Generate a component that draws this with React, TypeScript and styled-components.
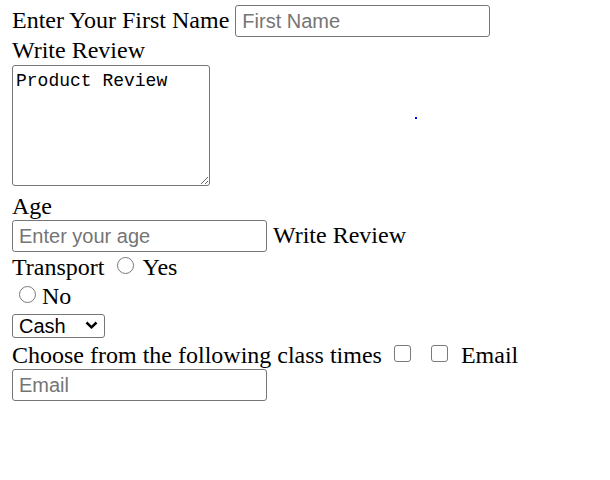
import React from "react";
import styled, { createGlobalStyle } from "styled-components";

const Global = createGlobalStyle`
  html, body { margin: 0; padding: 0; background: #fff; }
  body { font-family: "Liberation Serif", "Times New Roman", serif; color: #000; }
`;

const Page = styled.form`
  position: relative;
  padding: 5px 12px 0 12px;
  font-size: 24px;
  line-height: normal;
`;

const Line = styled.div<{ $mt?: number }>`
  margin-top: ${(p) => p.$mt ?? 0}px;
  white-space: nowrap;
`;

const TextInput = styled.input`
  box-sizing: border-box;
  width: 255px;
  height: 32px;
  margin: 0;
  padding: 0 6px;
  border: 1px solid #767676;
  border-radius: 3px;
  font-family: "Liberation Sans", Arial, sans-serif;
  font-size: 20px;
  color: #000;
  background: #fff;
  vertical-align: baseline;
  &::placeholder { color: #757575; }
`;

const Review = styled.textarea`
  box-sizing: border-box;
  width: 198px;
  height: 121px;
  margin: 0;
  padding: 5px 3px 3px 3px;
  border: 1px solid #767676;
  border-radius: 3px;
  font-family: "Liberation Mono", "Courier New", monospace;
  font-size: 18px;
  line-height: 1.15;
  color: #000;
  resize: both;
  vertical-align: baseline;
`;

const Radio = styled.input.attrs({ type: "radio" })<{ $ml: number; $mr: number }>`
  appearance: none;
  -webkit-appearance: none;
  box-sizing: border-box;
  display: inline-block;
  width: 17px;
  height: 17px;
  min-width: 17px;
  padding: 0;
  margin: 0 ${(p) => p.$mr}px 0 ${(p) => p.$ml}px;
  border: 1.4px solid #7a7a7a;
  border-radius: 50%;
  background: #fff;
  vertical-align: 1px;
`;

const Check = styled.input.attrs({ type: "checkbox" })<{ $ml: number; $mr: number }>`
  appearance: none;
  -webkit-appearance: none;
  box-sizing: border-box;
  display: inline-block;
  width: 17px;
  height: 17px;
  padding: 0;
  margin: 0 ${(p) => p.$mr}px 0 ${(p) => p.$ml}px;
  border: 1.4px solid #7a7a7a;
  border-radius: 3px;
  background: #fff;
  vertical-align: 1px;
`;

const SelectWrap = styled.span`
  position: relative;
  display: inline-block;
  vertical-align: baseline;
`;

const Select = styled.select`
  appearance: none;
  box-sizing: border-box;
  width: 93px;
  height: 24px;
  margin: 0;
  padding: 0 0 0 6px;
  border: 1px solid #767676;
  border-radius: 3px;
  background: #fff;
  color: #000;
  font-family: "Liberation Sans", Arial, sans-serif;
  font-size: 20px;
  line-height: 22px;
`;

const Chevron = styled.svg`
  position: absolute;
  right: 7px;
  top: 9px;
  width: 13px;
  height: 8px;
  pointer-events: none;
`;

const Dot = styled.a`
  position: absolute;
  left: 415px;
  top: 117px;
  width: 2px;
  height: 2px;
  background: #0000ee;
`;

const Gap = styled.span<{ $w: number }>`
  display: inline-block;
  width: ${(p) => p.$w}px;
`;

export default function App() {
  return (
    <>
      <Global />
      <Page onSubmit={(e) => e.preventDefault()}>
        <Line>
          Enter Your First Name <TextInput type="text" placeholder="First Name" />
        </Line>
        <Line>Write Review</Line>
        <Line $mt={1}>
          <Review defaultValue="Product Review" />
        </Line>
        <Line $mt={1}>Age</Line>
        <Line>
          <TextInput type="number" placeholder="Enter your age" />
          <Gap $w={6} />
          Write Review
        </Line>
        <Line $mt={2}>
          Transport
          <Radio name="transport" $ml={13} $mr={8} />
          Yes
        </Line>
        <Line $mt={2}>
          <Radio name="transport" $ml={7} $mr={6} />
          No
        </Line>
        <Line $mt={2}>
          <SelectWrap>
            <Select defaultValue="Cash">
              <option>Cash</option>
              <option>Card</option>
            </Select>
            <Chevron viewBox="0 0 13 8">
              <path d="M1.5 1.5 L6.5 6.3 L11.5 1.5" fill="none" stroke="#000" strokeWidth="2.5" />
            </Chevron>
          </SelectWrap>
        </Line>
        <Line $mt={3}>
          Choose from the following class times
          <Check $ml={12} $mr={0} />
          <Check $ml={20} $mr={0} />
          <Gap $w={13} />
          Email
        </Line>
        <Line>
          <TextInput type="email" placeholder="Email" />
        </Line>
        <Dot href="#" aria-label="link" />
      </Page>
    </>
  );
}
